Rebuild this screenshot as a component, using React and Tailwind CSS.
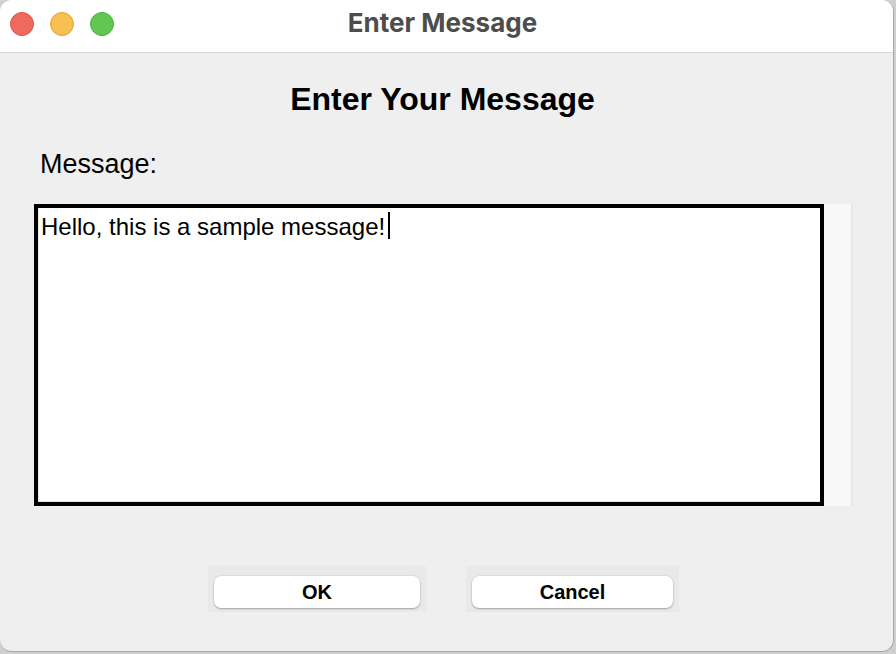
import React from 'react';

const sans = { fontFamily: '"Liberation Sans", Arial, sans-serif' };

const TrafficLight = ({ color, ring }) => (
  <span className={`block w-[24px] h-[24px] rounded-full border ${color} ${ring}`} />
);

const DialogButton = ({ label, wrap }) => (
  <div className={`${wrap} bg-[#e9e9e9] pt-[10px] pb-[4px] px-[6px]`}>
    <button
      className="w-full h-[32px] rounded-[7px] bg-white text-[20px] font-bold text-black shadow-[0_1px_2px_rgba(0,0,0,0.28),0_0_0_0.5px_rgba(0,0,0,0.08)]"
      style={sans}
    >
      {label}
    </button>
  </div>
);

const App = () => {
  return (
    <div className="w-[896px] h-[654px] bg-[#cfcfcf]">
      <div className="w-[894px] h-[652px] rounded-[12px] overflow-hidden bg-[#efefef] border-r border-b border-[#a9a9a9] flex flex-col">
        {/* Title bar */}
        <div className="h-[53px] shrink-0 bg-white border-b border-[#d6d6d6] grid grid-cols-[1fr_auto_1fr] items-center pr-2">
          <div className="flex items-center gap-4 pl-[10px] pb-[5px]">
            <TrafficLight color="bg-[#ee6a5f]" ring="border-[#d9554b]" />
            <TrafficLight color="bg-[#f6bf4f]" ring="border-[#dea53a]" />
            <TrafficLight color="bg-[#62c554]" ring="border-[#4fae43]" />
          </div>
          <div
            className="text-[26px] font-bold text-[#4d4d4d] pb-[7px]"
            style={{ fontFamily: 'Inter, "Liberation Sans", sans-serif' }}
          >
            Enter Message
          </div>
          <div />
        </div>

        {/* Body */}
        <div className="flex flex-col pr-2" style={sans}>
          <h1 className="mt-[28px] text-center text-[32px] leading-[36px] font-bold text-black">
            Enter Your Message
          </h1>

          <div className="mt-[32px] pl-[40px] text-[27px] leading-[30px] text-black">Message:</div>

          {/* Text area */}
          <div className="mt-[25px] ml-[34px] flex">
            <div className="w-[790px] h-[302px] border-4 border-black bg-white">
              <div className="h-full shadow-[inset_1px_-1px_0_#e3e3e3] pl-[3px] pt-[4px] text-[24px] leading-[28px] text-black">
                Hello, this is a sample message!
                <span className="inline-block align-[-4px] ml-[3px] w-[2px] h-[27px] bg-black" />
              </div>
            </div>
            <div className="w-[29px] h-[302px] bg-[#f8f8f8] border-r-2 border-[#e8e8e8]" />
          </div>

          {/* Buttons */}
          <div className="mt-[60px] flex justify-center gap-10 pl-[2px]">
            <DialogButton label="OK" wrap="w-[218px]" />
            <DialogButton label="Cancel" wrap="w-[213px]" />
          </div>
        </div>
      </div>
    </div>
  );
};

export default App;
